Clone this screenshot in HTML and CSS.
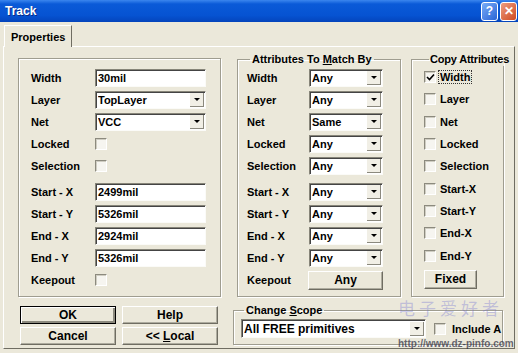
FILE: index.html
```html
<!DOCTYPE html>
<html lang="en">
<head>
    <meta charset="UTF-8">
    <title>Track</title>
    <link rel="stylesheet" href="styles.css">
</head>
<body>
    <div class="window">
        <div class="titlebar">
            <span class="title">Track</span>
            <div class="ctl">
                <span class="btn help">?</span>
                <span class="btn close">&#x2715;</span>
            </div>
        </div>

        <div class="tabs">
            <span class="tab">Properties</span>
        </div>

        <div class="page">
            <div class="top">
                <!-- properties -->
                <fieldset class="grp props">
                    <div class="row"><span class="lbl">Width</span><span class="field">30mil</span></div>
                    <div class="row"><span class="lbl">Layer</span><span class="sel wide"><span class="val">TopLayer</span><span class="arrow"></span></span></div>
                    <div class="row"><span class="lbl">Net</span><span class="sel wide"><span class="val">VCC</span><span class="arrow"></span></span></div>
                    <div class="row"><span class="lbl">Locked</span><span class="cb"></span></div>
                    <div class="row"><span class="lbl">Selection</span><span class="cb"></span></div>
                    <div class="row sep"><span class="lbl">Start - X</span><span class="field">2499mil</span></div>
                    <div class="row"><span class="lbl">Start - Y</span><span class="field">5326mil</span></div>
                    <div class="row"><span class="lbl">End - X</span><span class="field">2924mil</span></div>
                    <div class="row"><span class="lbl">End - Y</span><span class="field">5326mil</span></div>
                    <div class="row"><span class="lbl">Keepout</span><span class="cb"></span></div>
                </fieldset>

                <!-- attributes to match -->
                <fieldset class="grp match">
                    <legend>Attributes To <u>M</u>atch By</legend>
                    <div class="row"><span class="lbl">Width</span><span class="sel"><span class="val">Any</span><span class="arrow"></span></span></div>
                    <div class="row"><span class="lbl">Layer</span><span class="sel"><span class="val">Any</span><span class="arrow"></span></span></div>
                    <div class="row"><span class="lbl">Net</span><span class="sel"><span class="val">Same</span><span class="arrow"></span></span></div>
                    <div class="row"><span class="lbl">Locked</span><span class="sel"><span class="val">Any</span><span class="arrow"></span></span></div>
                    <div class="row"><span class="lbl">Selection</span><span class="sel"><span class="val">Any</span><span class="arrow"></span></span></div>
                    <div class="row sep"><span class="lbl">Start - X</span><span class="sel"><span class="val">Any</span><span class="arrow"></span></span></div>
                    <div class="row"><span class="lbl">Start - Y</span><span class="sel"><span class="val">Any</span><span class="arrow"></span></span></div>
                    <div class="row"><span class="lbl">End - X</span><span class="sel"><span class="val">Any</span><span class="arrow"></span></span></div>
                    <div class="row"><span class="lbl">End - Y</span><span class="sel"><span class="val">Any</span><span class="arrow"></span></span></div>
                    <div class="row"><span class="lbl">Keepout</span><span class="button any">Any</span></div>
                </fieldset>

                <!-- copy attributes -->
                <fieldset class="grp copy">
                    <legend>Copy Attributes</legend>
                    <div class="row"><span class="cb checked"><svg width="9" height="9" viewBox="0 0 9 9"><path d="M1 4 L3.5 6.5 L8 1.5" fill="none" stroke="#000" stroke-width="1.6"/></svg></span><span class="focus">Width</span></div>
                    <div class="row"><span class="cb"></span><span>Layer</span></div>
                    <div class="row"><span class="cb"></span><span>Net</span></div>
                    <div class="row"><span class="cb"></span><span>Locked</span></div>
                    <div class="row"><span class="cb"></span><span>Selection</span></div>
                    <div class="row"><span class="cb"></span><span>Start-X</span></div>
                    <div class="row"><span class="cb"></span><span>Start-Y</span></div>
                    <div class="row"><span class="cb"></span><span>End-X</span></div>
                    <div class="row"><span class="cb"></span><span>End-Y</span></div>
                    <span class="button fixed">Fixed</span>
                </fieldset>
            </div>

            <div class="bottom">
                <div class="btns">
                    <span class="button default">OK</span>
                    <span class="button">Help</span>
                    <span class="button">Cancel</span>
                    <span class="button"><span>&lt;&lt; <u>L</u>ocal</span></span>
                </div>

                <fieldset class="grp scope">
                    <legend>Change <u>S</u>cope</legend>
                    <div class="scope-row">
                        <span class="sel scope-sel"><span class="val">All FREE primitives</span><span class="arrow"></span></span>
                        <span class="cb"></span>
                        <span class="incl">Include A</span>
                    </div>
                </fieldset>
            </div>
        </div>

        <!-- watermark of the source picture -->
        <span class="wm wm-cn">电子爱好者</span>
        <span class="wm wm-url">http://www.dz-pinfo.com</span>
    </div>
</body>
</html>
```

FILE: styles.css
```css
body {
    margin: 0;
    background-color: #ebe8da;
    font-family: "Liberation Sans", Arial, sans-serif;
    font-size: 11px;
    font-weight: bold;
    color: #000;
}

.window {
    position: relative;
    width: 518px;
    height: 353px;
    overflow: hidden;
}

/* title bar */
.titlebar {
    height: 22px;
    box-sizing: border-box;
    padding: 0 1px 0 5px;
    display: flex;
    align-items: center;
    justify-content: space-between;
    background: linear-gradient(#3b86ee, #0a5ad8 18%, #0653d2 70%, #0444bb);
}

.title {
    color: #fff;
    font-size: 12px;
    text-shadow: 1px 1px 0 #0b2a86;
}

.ctl {
    display: flex;
    gap: 2px;
}

.ctl .btn {
    width: 15px;
    height: 17px;
    border: 1px solid #fff;
    border-radius: 3px;
    color: #fff;
    display: flex;
    align-items: center;
    justify-content: center;
    font-size: 12px;
}

.help {
    background: linear-gradient(135deg, #78acf7, #2a64d6);
}

.close {
    background: linear-gradient(135deg, #ec9c80, #cf4a22);
}

/* tab strip */
.tabs {
    height: 24px;
    box-sizing: border-box;
    padding: 3px 0 0 4px;
    display: flex;
    align-items: flex-end;
}

.tab {
    position: relative;
    z-index: 1;
    height: 22px;
    box-sizing: border-box;
    padding: 0 6px 0 6px;
    margin-bottom: -1px;
    display: flex;
    align-items: center;
    background-color: #ebe8da;
    border-top: 1px solid #fff;
    border-left: 1px solid #fff;
    border-right: 1px solid #6f6d62;
}

.page {
    height: 303px;
    box-sizing: border-box;
    margin: 0 3px 0 3px;
    padding: 6px 0 0 14px;
    border: 1px solid;
    border-color: #fff #6f6d62 #6f6d62 #fff;
}

.top {
    display: flex;
    align-items: flex-start;
}

/* group boxes */
.grp {
    margin: 0;
    padding: 0;
    min-width: 0;
    border: 1px solid #9f9d90;
    box-shadow: inset 1px 1px 0 #fff, 1px 1px 0 #fff;
}

.grp legend {
    padding: 0 2px;
    line-height: 13px;
    white-space: nowrap;
}

.props {
    width: 203px;
    height: 239px;
    box-sizing: border-box;
    margin-top: 5px;
    padding: 8px 0 0 12px;
}

.match {
    width: 164px;
    height: 244px;
    box-sizing: border-box;
    margin-left: 16px;
    padding: 1px 0 0 9px;
}

.match legend {
    margin-left: 3px;
}

.copy {
    width: 93px;
    height: 244px;
    box-sizing: border-box;
    margin-left: 10px;
    padding: 0 0 0 12px;
}

.copy legend {
    margin-left: 5px;
    padding: 0 1px;
    letter-spacing: -0.2px;
}

.row {
    height: 22px;
    display: flex;
    align-items: center;
}

.row.sep {
    margin-top: 4px;
}

.lbl {
    width: 64px;
    flex: none;
}

.match .lbl {
    width: 62px;
}

.copy .row {
    gap: 4px;
    height: 22.3px;
}

.focus {
    outline: 1px dotted #333;
    padding: 0 1px;
    margin-left: -1px;
}

/* fields */
.field, .sel {
    height: 18px;
    box-sizing: border-box;
    border: 1px solid;
    border-color: #878579 #fbfbf8 #fbfbf8 #878579;
    box-shadow: inset 1px 1px 0 #444;
    background-color: #fff;
    display: flex;
    align-items: center;
}

.field {
    width: 111px;
    padding-left: 2px;
}

.sel {
    width: 74px;
    flex: none;
    padding: 1px 1px 1px 2px;
}

.sel.wide {
    width: 111px;
}

.sel .val {
    flex: 1;
    white-space: nowrap;
    overflow: hidden;
}

.arrow {
    width: 14px;
    height: 14px;
    flex: none;
    box-sizing: border-box;
    border-right: 1px solid #8b897e;
    border-bottom: 1px solid #8b897e;
    background-color: #f1efe6;
    position: relative;
}

.arrow::after {
    content: "";
    position: absolute;
    left: 4px;
    top: 5px;
    border-left: 3px solid transparent;
    border-right: 3px solid transparent;
    border-top: 3px solid #000;
}

/* check boxes */
.cb {
    width: 12px;
    height: 12px;
    flex: none;
    box-sizing: border-box;
    border: 1px solid;
    border-color: #8c8a7e #fff #fff #8c8a7e;
    box-shadow: inset 1px 1px 0 #cfcdc2;
    background-color: #f6f5f0;
    display: flex;
    align-items: center;
    justify-content: center;
}

/* buttons */
.button {
    box-sizing: border-box;
    height: 18px;
    display: flex;
    align-items: center;
    justify-content: center;
    border: 1px solid;
    border-color: #fff #6f6d62 #6f6d62 #fff;
    box-shadow: inset -1px -1px 0 #aeac9f;
    background-color: #ebe8da;
    font-size: 12px;
}

.button.default {
    border: 1px solid #000;
    box-shadow: inset 1px 1px 0 #fff, inset -2px -2px 0 #8c8a7e;
}

.button.any {
    width: 75px;
    height: 19px;
    margin-left: -1px;
}

.button.fixed {
    width: 53px;
    height: 19px;
    margin-top: 3px;
}

.bottom {
    display: flex;
    margin-top: 7px;
}

.btns {
    margin: 2px 0 0 2px;
    display: grid;
    grid-template-columns: 96px 96px;
    grid-auto-rows: 18px;
    column-gap: 6px;
    row-gap: 3px;
}

.scope {
    width: 270px;
    height: 41px;
    box-sizing: border-box;
    margin-left: 15px;
    padding: 2px 0 0 7px;
    overflow: hidden;
}

.scope legend {
    margin-left: 3px;
}

.scope-row {
    display: flex;
    align-items: center;
    gap: 4px;
    white-space: nowrap;
}

.scope-sel {
    width: 185px;
    height: 19px;
    margin-right: 4px;
    font-size: 12px;
}

.incl {
    margin-left: 2px;
}

/* watermark */
.wm {
    position: absolute;
    white-space: nowrap;
    pointer-events: none;
    line-height: 1;
}

.wm-cn {
    left: 398px;
    top: 299px;
    font-family: "Noto Sans CJK SC", sans-serif;
    font-weight: normal;
    font-size: 17px;
    letter-spacing: 4px;
    color: rgba(110, 110, 210, 0.35);
}

.wm-url {
    left: 398px;
    top: 339px;
    font-size: 10px;
    color: rgba(40, 40, 60, 0.7);
}
```
